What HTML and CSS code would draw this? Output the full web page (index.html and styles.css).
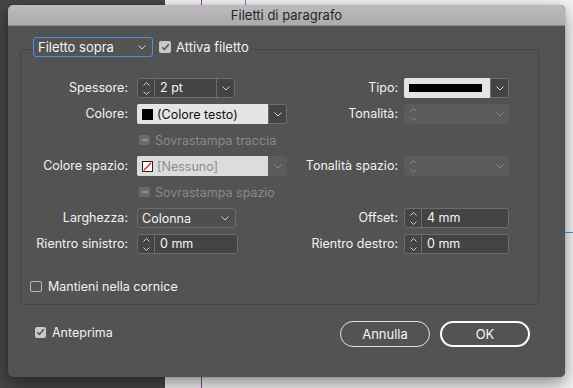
FILE: index.html
```html
<!DOCTYPE html>
<html lang="it">
<head>
<meta charset="utf-8">
<title>Filetti di paragrafo</title>
<link rel="stylesheet" href="styles.css">
</head>
<body>
<div class="dialog">
  <div class="titlebar">Filetti di paragrafo</div>
  <div class="content">
    <fieldset class="group">
      <legend class="legend">
        <span class="select select-focus">
          <span class="select-text">Filetto sopra</span>
          <svg class="chev" width="8" height="5" viewBox="0 0 8 5"><path d="M0.5 0.5 L4 4 L7.5 0.5" fill="none" stroke="#d0d0d0" stroke-width="1"/></svg>
        </span>
        <span class="check check-legend">
          <span class="box box-on"><svg width="9" height="8" viewBox="0 0 9 8"><path d="M1.2 4.2 L3.4 6.4 L7.8 1.2" fill="none" stroke="#555" stroke-width="1.6"/></svg></span>
          <span class="check-text">Attiva filetto</span>
        </span>
      </legend>

      <div class="grid">
        <!-- row 1 -->
        <span class="lbl">Spessore:</span>
        <div class="cell">
          <div class="stepper w-spessore">
            <span class="arrows">
              <svg width="7" height="4" viewBox="0 0 7 4"><path d="M0.5 3.5 L3.5 0.5 L6.5 3.5" fill="none" stroke="#cfcfcf"/></svg>
              <svg width="7" height="4" viewBox="0 0 7 4"><path d="M0.5 0.5 L3.5 3.5 L6.5 0.5" fill="none" stroke="#cfcfcf"/></svg>
            </span>
            <span class="value">2 pt</span>
            <span class="drop"><svg width="8" height="5" viewBox="0 0 8 5"><path d="M0.5 0.5 L4 4 L7.5 0.5" fill="none" stroke="#d0d0d0"/></svg></span>
          </div>
        </div>
        <span class="lbl lbl-r">Tipo:</span>
        <div class="cell">
          <div class="combo">
            <span class="light"><span class="line-sample"></span></span>
            <span class="drop"><svg width="8" height="5" viewBox="0 0 8 5"><path d="M0.5 0.5 L4 4 L7.5 0.5" fill="none" stroke="#d0d0d0"/></svg></span>
          </div>
        </div>

        <!-- row 2 -->
        <span class="lbl">Colore:</span>
        <div class="cell">
          <div class="combo">
            <span class="light"><span class="swatch swatch-black"></span><span class="light-text">(Colore testo)</span></span>
            <span class="drop"><svg width="8" height="5" viewBox="0 0 8 5"><path d="M0.5 0.5 L4 4 L7.5 0.5" fill="none" stroke="#d0d0d0"/></svg></span>
          </div>
        </div>
        <span class="lbl lbl-r">Tonalità:</span>
        <div class="cell">
          <div class="stepper disabled">
            <span class="arrows">
              <svg width="7" height="4" viewBox="0 0 7 4"><path d="M0.5 3.5 L3.5 0.5 L6.5 3.5" fill="none" stroke="#8c8c8c"/></svg>
              <svg width="7" height="4" viewBox="0 0 7 4"><path d="M0.5 0.5 L3.5 3.5 L6.5 0.5" fill="none" stroke="#8c8c8c"/></svg>
            </span>
            <span class="value"></span>
            <span class="drop"><svg width="8" height="5" viewBox="0 0 8 5"><path d="M0.5 0.5 L4 4 L7.5 0.5" fill="none" stroke="#8c8c8c"/></svg></span>
          </div>
        </div>

        <!-- row 3 -->
        <span></span>
        <div class="cell">
          <span class="check check-disabled">
            <span class="box box-mixed"><span class="dash"></span></span>
            <span class="check-text">Sovrastampa traccia</span>
          </span>
        </div>
        <span></span>
        <span></span>

        <!-- row 4 -->
        <span class="lbl">Colore spazio:</span>
        <div class="cell">
          <div class="combo disabled">
            <span class="light"><span class="swatch swatch-none"><svg width="11" height="11" viewBox="0 0 11 11"><path d="M1 10 L10 1" stroke="#e0201c" stroke-width="1.6"/></svg></span><span class="light-text">[Nessuno]</span></span>
            <span class="drop"><svg width="8" height="5" viewBox="0 0 8 5"><path d="M0.5 0.5 L4 4 L7.5 0.5" fill="none" stroke="#8c8c8c"/></svg></span>
          </div>
        </div>
        <span class="lbl lbl-r">Tonalità spazio:</span>
        <div class="cell">
          <div class="stepper disabled">
            <span class="arrows">
              <svg width="7" height="4" viewBox="0 0 7 4"><path d="M0.5 3.5 L3.5 0.5 L6.5 3.5" fill="none" stroke="#8c8c8c"/></svg>
              <svg width="7" height="4" viewBox="0 0 7 4"><path d="M0.5 0.5 L3.5 3.5 L6.5 0.5" fill="none" stroke="#8c8c8c"/></svg>
            </span>
            <span class="value"></span>
            <span class="drop"><svg width="8" height="5" viewBox="0 0 8 5"><path d="M0.5 0.5 L4 4 L7.5 0.5" fill="none" stroke="#8c8c8c"/></svg></span>
          </div>
        </div>

        <!-- row 5 -->
        <span></span>
        <div class="cell">
          <span class="check check-disabled">
            <span class="box box-mixed"><span class="dash"></span></span>
            <span class="check-text">Sovrastampa spazio</span>
          </span>
        </div>
        <span></span>
        <span></span>

        <!-- row 6 -->
        <span class="lbl">Larghezza:</span>
        <div class="cell">
          <span class="select w-larghezza">
            <span class="select-text">Colonna</span>
            <svg class="chev" width="8" height="5" viewBox="0 0 8 5"><path d="M0.5 0.5 L4 4 L7.5 0.5" fill="none" stroke="#d0d0d0"/></svg>
          </span>
        </div>
        <span class="lbl lbl-r">Offset:</span>
        <div class="cell">
          <div class="stepper">
            <span class="arrows">
              <svg width="7" height="4" viewBox="0 0 7 4"><path d="M0.5 3.5 L3.5 0.5 L6.5 3.5" fill="none" stroke="#cfcfcf"/></svg>
              <svg width="7" height="4" viewBox="0 0 7 4"><path d="M0.5 0.5 L3.5 3.5 L6.5 0.5" fill="none" stroke="#cfcfcf"/></svg>
            </span>
            <span class="value">4 mm</span>
          </div>
        </div>

        <!-- row 7 -->
        <span class="lbl">Rientro sinistro:</span>
        <div class="cell">
          <div class="stepper w-rientro">
            <span class="arrows">
              <svg width="7" height="4" viewBox="0 0 7 4"><path d="M0.5 3.5 L3.5 0.5 L6.5 3.5" fill="none" stroke="#cfcfcf"/></svg>
              <svg width="7" height="4" viewBox="0 0 7 4"><path d="M0.5 0.5 L3.5 3.5 L6.5 0.5" fill="none" stroke="#cfcfcf"/></svg>
            </span>
            <span class="value">0 mm</span>
          </div>
        </div>
        <span class="lbl lbl-r">Rientro destro:</span>
        <div class="cell">
          <div class="stepper">
            <span class="arrows">
              <svg width="7" height="4" viewBox="0 0 7 4"><path d="M0.5 3.5 L3.5 0.5 L6.5 3.5" fill="none" stroke="#cfcfcf"/></svg>
              <svg width="7" height="4" viewBox="0 0 7 4"><path d="M0.5 0.5 L3.5 3.5 L6.5 0.5" fill="none" stroke="#cfcfcf"/></svg>
            </span>
            <span class="value">0 mm</span>
          </div>
        </div>
      </div>

      <div class="mantieni">
        <span class="check">
          <span class="box box-off"></span>
          <span class="check-text">Mantieni nella cornice</span>
        </span>
      </div>
    </fieldset>

    <div class="footer">
      <span class="check anteprima">
        <span class="box box-on"><svg width="9" height="8" viewBox="0 0 9 8"><path d="M1.2 4.2 L3.4 6.4 L7.8 1.2" fill="none" stroke="#555" stroke-width="1.6"/></svg></span>
        <span class="check-text">Anteprima</span>
      </span>
      <div class="buttons">
        <button class="btn">Annulla</button>
        <button class="btn btn-ok">OK</button>
      </div>
    </div>
  </div>
</div>
</body>
</html>
```

FILE: styles.css
```css
* { box-sizing: border-box; }

html, body {
  margin: 0;
  width: 573px;
  height: 388px;
  overflow: hidden;
}

body {
  font-family: Inter, "Liberation Sans", sans-serif;
  font-size: 12.5px;
  color: #f2f2f2;
  background:
    linear-gradient(#9b33d6, #9b33d6) 201px 0 / 1px 100% no-repeat,
    linear-gradient(#4a8fe0, #4a8fe0) 245px 0 / 1px 8px no-repeat,
    linear-gradient(#4a8fe0, #4a8fe0) 560px 232px / 13px 1px no-repeat,
    linear-gradient(90deg, #464646 0 165px, #f4f4f4 165px);
  padding: 5px 0 0 8px;
}

.dialog {
  width: 557px;
  height: 372px;
  background: #535353;
  border-radius: 5px;
  overflow: hidden;
  box-shadow: 0 6px 18px rgba(0, 0, 0, 0.45), 0 0 1px rgba(0, 0, 0, 0.6);
}

.titlebar {
  height: 21px;
  line-height: 21px;
  text-align: center;
  font-size: 13px;
  color: #262626;
  background: linear-gradient(#bdbbbd, #acaaac);
  border-bottom: 1px solid #8f8f8f;
}

.content {
  padding: 0 26px 0 12px;
}

.group {
  margin: 11px 0 0 0;
  padding: 17px 0 8px 0;
  border: 1px solid #454545;
  border-radius: 3px;
  min-width: 0;
}

.legend {
  margin-left: 10px;
  padding: 0 2px 4px 2px;
  display: flex;
  align-items: center;
  gap: 6px;
}

.select {
  display: flex;
  align-items: center;
  justify-content: space-between;
  height: 20px;
  border: 1px solid #6c6c6c;
  border-radius: 3px;
  background: #4f4f4f;
  padding: 0 6px 0 4px;
  color: #f4f4f4;
}

.select-focus {
  width: 120px;
  border-color: #4a90e2;
  background: #535353;
  font-size: 13px;
}

.w-larghezza {
  width: 99px;
}

.check {
  display: flex;
  align-items: center;
  gap: 5px;
  color: #f2f2f2;
}

.check-legend {
  font-size: 13px;
}

.box {
  width: 12px;
  height: 12px;
  border-radius: 2px;
  display: flex;
  align-items: center;
  justify-content: center;
  flex: none;
}

.box-on {
  background: #c9c9c9;
}

.box-off {
  border: 1px solid #b8b8b8;
  width: 12px;
  height: 11px;
}

.box-mixed {
  background: #6a6a6a;
  width: 11px;
  height: 10px;
}

.dash {
  width: 6px;
  height: 2px;
  background: #8d8d8d;
}

.check-disabled {
  color: #8a8a8a;
  padding-left: 2px;
}

.grid {
  display: grid;
  grid-template-columns: 116px 150px 117px 105px;
  grid-template-rows: repeat(7, 20px);
  row-gap: 6px;
}

.lbl {
  text-align: right;
  padding-right: 9px;
  line-height: 20px;
  white-space: nowrap;
  color: #f2f2f2;
}

.lbl-r {
  padding-right: 6px;
}

.cell {
  display: flex;
  align-items: center;
}

.stepper {
  display: flex;
  width: 100%;
  height: 20px;
  border: 1px solid #6c6c6c;
  border-radius: 3px;
  background: #444444;
}

.w-spessore { width: 98px; }
.w-rientro { width: 101px; }

.arrows {
  width: 17px;
  flex: none;
  border-right: 1px solid #6c6c6c;
  display: flex;
  flex-direction: column;
  align-items: center;
  justify-content: space-between;
  padding: 3px 0 2px;
}

.arrows svg { display: block; }

.value {
  flex: 1;
  padding-left: 5px;
  line-height: 18px;
  color: #f4f4f4;
}

.drop {
  width: 18px;
  flex: none;
  border-left: 1px solid #6c6c6c;
  display: flex;
  align-items: center;
  justify-content: center;
}

.stepper.disabled {
  border-color: transparent;
  background: #5b5b5b;
}

.stepper.disabled .arrows,
.stepper.disabled .drop {
  border-color: transparent;
}

.combo {
  display: flex;
  width: 100%;
  height: 20px;
}

.light {
  flex: 1;
  display: flex;
  align-items: center;
  background: #e4e4e4;
  border-radius: 2px 0 0 2px;
  padding-left: 5px;
  color: #111111;
}

.combo .drop {
  width: 19px;
  background: #444444;
  border: 1px solid #6c6c6c;
  border-radius: 0 3px 3px 0;
}

.combo.disabled .light {
  background: #dcdcdc;
  color: #8c8c8c;
}

.combo.disabled .drop {
  background: #5b5b5b;
  border-color: transparent;
}

.line-sample {
  width: 73px;
  height: 8px;
  background: #000;
}

.swatch {
  width: 11px;
  height: 11px;
  flex: none;
  margin-right: 4px;
}

.swatch-black {
  background: #000;
}

.swatch-none {
  background: #fff;
  border: 1px solid #222;
  display: flex;
}

.swatch-none svg {
  width: 9px;
  height: 9px;
}

.mantieni {
  margin: 22px 0 0 9px;
  height: 20px;
  display: flex;
  align-items: center;
}

.mantieni .check { gap: 6px; }

.footer {
  margin-top: 16px;
  height: 26px;
  padding: 0 9px 0 15px;
  display: flex;
  justify-content: space-between;
}

.anteprima {
  gap: 6px;
  height: 20px;
  margin-top: 1px;
}

.anteprima .box {
  width: 11px;
  height: 11px;
}

.buttons {
  display: flex;
  gap: 10px;
}

.btn {
  width: 90px;
  height: 26px;
  border-radius: 13px;
  border: 1px solid #e2e2e2;
  background: transparent;
  color: #f4f4f4;
  font-family: Inter, "Liberation Sans", sans-serif;
  font-size: 13px;
  padding: 0;
}

.btn-ok {
  border: 2px solid #ffffff;
}
```
